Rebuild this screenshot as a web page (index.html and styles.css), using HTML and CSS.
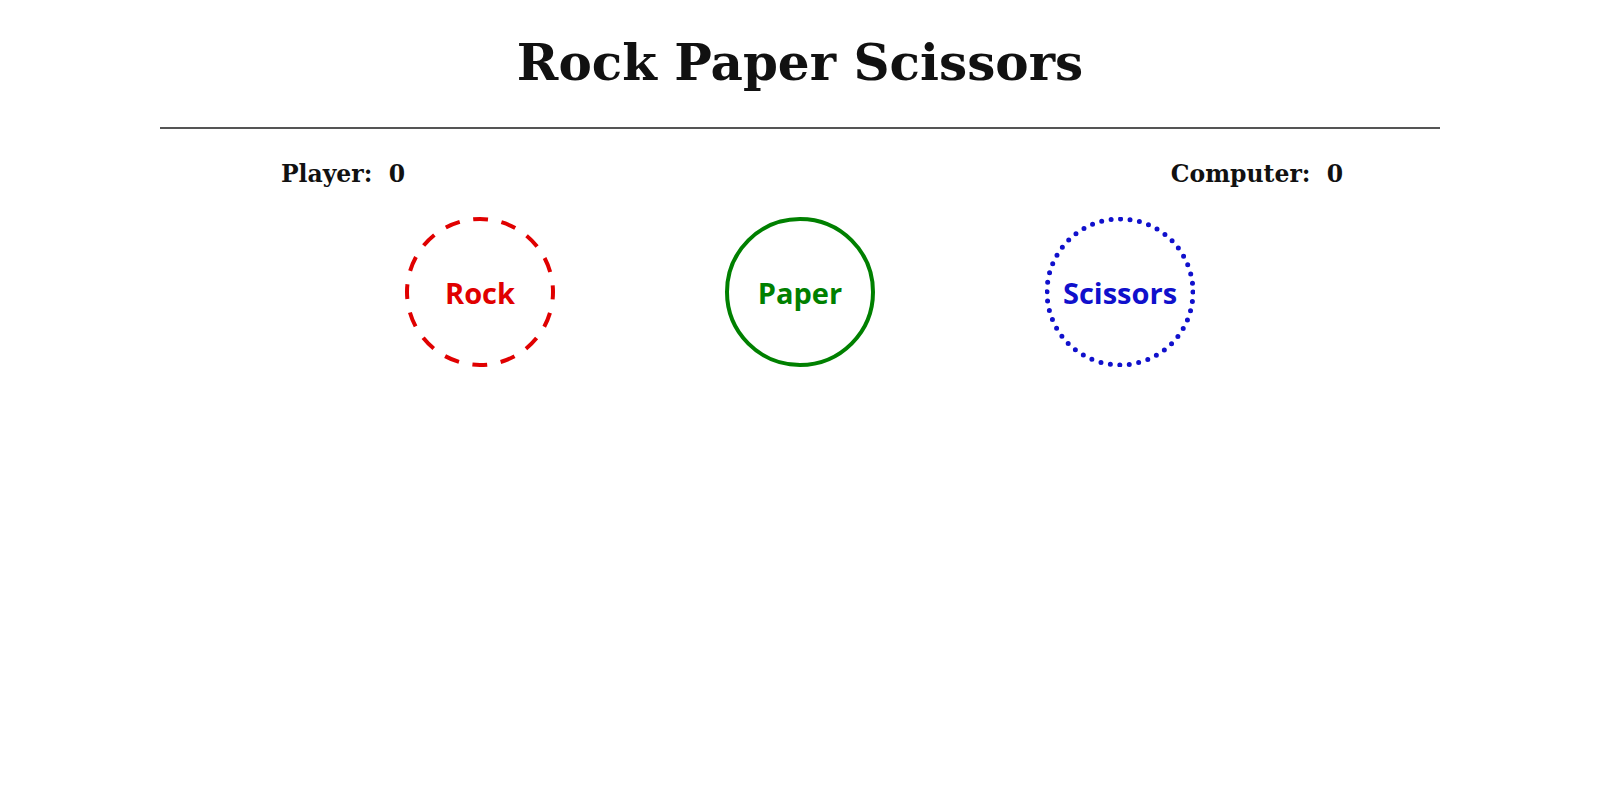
FILE: index.html
```html
<!DOCTYPE html>
<html lang="en">
<head>
<meta charset="utf-8">
<title>Rock Paper Scissors</title>
<link rel="stylesheet" href="styles.css">
</head>
<body>
<h1 class="title">Rock Paper Scissors</h1>
<hr class="divider">
<div class="scores">
  <div class="score">Player:&nbsp; 0</div>
  <div class="score">Computer:&nbsp; 0</div>
</div>
<div class="choices">
  <div class="slot">
    <div class="choice rock">
      <svg class="ring" viewBox="0 0 150 150" width="150" height="150" aria-hidden="true">
        <circle cx="75" cy="75" r="73" fill="none" stroke="currentColor" stroke-width="4" stroke-dasharray="15 13.67" stroke-dashoffset="7.5"/>
      </svg>
      <span class="label">Rock</span>
    </div>
  </div>
  <div class="slot">
    <div class="choice paper">
      <svg class="ring" viewBox="0 0 150 150" width="150" height="150" aria-hidden="true">
        <circle cx="75" cy="75" r="73" fill="none" stroke="currentColor" stroke-width="4"/>
      </svg>
      <span class="label">Paper</span>
    </div>
  </div>
  <div class="slot">
    <div class="choice scissors">
      <svg class="ring" viewBox="0 0 150 150" width="150" height="150" aria-hidden="true">
        <circle cx="75" cy="75" r="73" fill="none" stroke="currentColor" stroke-width="5" stroke-linecap="round" stroke-dasharray="0 9.556"/>
      </svg>
      <span class="label">Scissors</span>
    </div>
  </div>
</div>
</body>
</html>
```
FILE: styles.css
```css
html, body {
  margin: 0;
  padding: 0;
  background: #fff;
}
body {
  font-family: "DejaVu Serif", serif;
  color: #111;
}
.title {
  margin: 0;
  padding-top: 30px;
  text-align: center;
  font-size: 50px;
  font-weight: bold;
  line-height: 66px;
}
.divider {
  width: 80%;
  margin: 31px auto 0;
  border: 0;
  border-top: 2px solid #555;
  height: 0;
}
.scores {
  width: 80%;
  margin: 30px auto 0;
  display: flex;
  justify-content: space-between;
}
.score {
  width: 366px;
  text-align: center;
  font-weight: bold;
  font-size: 23.5px;
  line-height: 30px;
}
.choices {
  width: 60%;
  margin: 28px auto 0;
  display: grid;
  grid-template-columns: repeat(3, 1fr);
}
.slot {
  display: flex;
  justify-content: center;
}
.choice {
  width: 150px;
  height: 150px;
  display: grid;
  place-items: center;
}
.ring,
.label {
  grid-area: 1 / 1;
}
.ring {
  display: block;
}
.label {
  font-family: "Open Sans", sans-serif;
  font-weight: bold;
  font-size: 29px;
  line-height: 1;
}
.rock {
  color: #e00000;
}
.paper {
  color: #008000;
}
.scissors {
  color: #1010cc;
}
```
